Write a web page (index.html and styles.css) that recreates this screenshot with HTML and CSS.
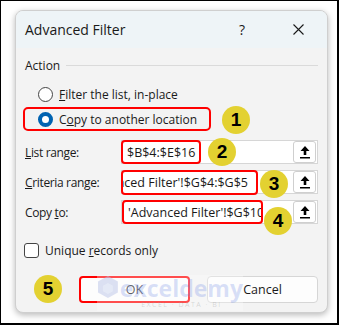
FILE: index.html
```html
<!DOCTYPE html>
<html lang="en">
<head>
  <meta charset="UTF-8">
  <title>Advanced Filter</title>
  <link rel="stylesheet" href="styles.css">
</head>
<body>
<div class="frame">
  <div class="dialog">
    <div class="titlebar">
      <span class="title">Advanced Filter</span>
      <span class="help">?</span>
      <svg class="close" width="11" height="11" viewBox="0 0 11 11">
        <path d="M0.5 0.5 L10.5 10.5 M10.5 0.5 L0.5 10.5" stroke="#1a1a1a" stroke-width="1.1" fill="none"/>
      </svg>
    </div>

    <div class="content">
      <div class="group-head">
        <span>Action</span>
        <div class="rule"></div>
      </div>

      <div class="radio-row">
        <span class="radio"></span>
        <span><u>F</u>ilter the list, in-place</span>
      </div>

      <div class="radio-row marked">
        <span class="radio checked"></span>
        <span>C<u>o</u>py to another location</span>
      </div>

      <div class="field">
        <span class="flabel"><u>L</u>ist range:</span>
        <div class="input">
          <span class="mark">$B$4:$E$16</span>
          <span class="pick">
            <svg width="10" height="13" viewBox="0 0 10 13"><path d="M5 0 L9.5 5 L6.3 5 L6.3 9 L3.7 9 L3.7 5 L0.5 5 Z M0 11 H10 V12.6 H0 Z" fill="#000"/></svg>
          </span>
        </div>
      </div>

      <div class="field">
        <span class="flabel"><u>C</u>riteria range:</span>
        <div class="input">
          <span class="mark mark-wide clip-start"><span>'Advanced Filter'!$G$4:$G$5</span></span>
          <span class="pick">
            <svg width="10" height="13" viewBox="0 0 10 13"><path d="M5 0 L9.5 5 L6.3 5 L6.3 9 L3.7 9 L3.7 5 L0.5 5 Z M0 11 H10 V12.6 H0 Z" fill="#000"/></svg>
          </span>
        </div>
      </div>

      <div class="field">
        <span class="flabel">Copy <u>t</u>o:</span>
        <div class="input">
          <span class="mark mark-wider"><span>'Advanced Filter'!$G$10</span></span>
          <span class="pick">
            <svg width="10" height="13" viewBox="0 0 10 13"><path d="M5 0 L9.5 5 L6.3 5 L6.3 9 L3.7 9 L3.7 5 L0.5 5 Z M0 11 H10 V12.6 H0 Z" fill="#000"/></svg>
          </span>
        </div>
      </div>

      <div class="check-row">
        <span class="checkbox"></span>
        <span>Unique <u>r</u>ecords only</span>
      </div>

      <div class="buttons">
        <span class="btn btn-ok">OK</span>
        <span class="btn">Cancel</span>
      </div>
    </div>
  </div>

  <!-- watermark -->
  <div class="watermark">
    <svg width="22" height="24" viewBox="0 0 22 24">
      <path d="M11 1 L21 6.5 L21 17.5 L11 23 L1 17.5 L1 6.5 Z" fill="#b9c3e8" opacity="0.5"/>
      <path d="M11 8 L16 10.8 L16 16.3 L11 19 L6 16.3 L6 10.8 Z" fill="#e8ecf8" opacity="0.7"/>
    </svg>
    <div class="wm-text">
      <span class="wm-name">exceldemy</span>
      <span class="wm-sub">EXCEL · DATA · BI</span>
    </div>
  </div>

  <!-- number badges -->
  <span class="badge b1">1</span>
  <span class="badge b2">2</span>
  <span class="badge b3">3</span>
  <span class="badge b4">4</span>
  <span class="badge b5">5</span>
</div>
</body>
</html>
```

FILE: styles.css
```css
body {
  margin: 0;
  font-family: "Open Sans", "Noto Sans", sans-serif;
  color: #1a1a1a;
}
.frame {
  position: relative;
  width: 339px;
  height: 325px;
  box-sizing: border-box;
  border: 1px solid #000;
  border-right-width: 2px;
  border-bottom-width: 2px;
  background: #fff;
  padding: 9px 0 0 14px;
}
.dialog {
  width: 313px;
  height: 303px;
  box-sizing: border-box;
  border: 1px solid #cfcfcf;
  border-radius: 8px;
  background: #f3f3f3;
  box-shadow: 0 2px 6px rgba(0,0,0,0.28);
  overflow: hidden;
}
.titlebar {
  height: 37px;
  background: #eef4f7;
  display: flex;
  align-items: center;
  padding: 0 23px 0 9px;
  font-size: 14px;
}
.title {
  flex: 1;
}
.help {
  margin-right: 48px;
  font-size: 14px;
}
.content {
  padding: 0 9px;
  font-size: 12px;
}
.group-head {
  display: flex;
  align-items: center;
  margin-top: 9px;
  height: 16px;
}
.rule {
  flex: 1;
  height: 1px;
  background: #dadada;
  margin-left: 6px;
}
.radio-row {
  display: flex;
  align-items: center;
  height: 20px;
  margin-top: 11px;
  padding-left: 13px;
}
.radio {
  width: 15px;
  height: 15px;
  box-sizing: border-box;
  border: 1px solid #444;
  border-radius: 50%;
  margin-right: 6px;
  background: #fff;
}
.radio.checked {
  border: 4px solid #0063b1;
}
.radio-row.marked {
  height: 24px;
  width: 188px;
  box-sizing: border-box;
  margin: 3px 0 0 -2px;
  padding-left: 13px;
  border: 2px solid #f00;
  border-radius: 5px;
}
.field {
  display: grid;
  grid-template-columns: 96px 1fr;
  align-items: center;
  margin-top: 9px;
}
.field + .field {
  margin-top: 6px;
}
.flabel {
  letter-spacing: -0.35px;
}
.input {
  display: flex;
  align-items: center;
  height: 24px;
  box-sizing: border-box;
  border: 1px solid #d6d6d6;
  background: #fff;
}
.mark {
  display: flex;
  align-items: center;
  height: 24px;
  box-sizing: border-box;
  margin: 0 0 0 -1px;
  padding: 0 4px;
  border: 2px solid #f00;
  border-radius: 4px;
  font-size: 12.5px;
  white-space: nowrap;
  overflow: hidden;
}
.mark-wide {
  width: 137px;
  height: 25px;
}
.clip-start {
  justify-content: flex-end;
  padding-right: 8px;
}
.mark-wider {
  width: 141px;
  margin-left: 0;
  padding-right: 0;
}
.pick {
  margin-left: auto;
  margin-right: 1px;
  width: 23px;
  height: 22px;
  box-sizing: border-box;
  border: 1px solid #cfcfcf;
  border-radius: 3px;
  background: #fff;
  display: flex;
  align-items: center;
  justify-content: center;
}
.check-row {
  display: flex;
  align-items: center;
  height: 20px;
  margin-top: 16px;
  margin-left: -1px;
}
.checkbox {
  width: 15px;
  height: 15px;
  box-sizing: border-box;
  border: 1px solid #444;
  border-radius: 3px;
  background: #fff;
  margin-right: 6px;
}
.buttons {
  display: flex;
  justify-content: flex-end;
  gap: 17px;
  margin-top: 16px;
}
.btn {
  width: 111px;
  height: 27px;
  box-sizing: border-box;
  border: 1px solid #d6d6d6;
  border-radius: 4px;
  background: #fdfdfd;
  display: flex;
  align-items: center;
  justify-content: center;
  font-size: 12.5px;
}
.btn-ok {
  border: 2px solid #f00;
}
.watermark {
  position: absolute;
  left: 96px;
  top: 274px;
  width: 146px;
  height: 36px;
  display: flex;
  align-items: flex-start;
  gap: 1px;
  background: rgba(255,255,255,0.3);
}
.wm-text {
  display: flex;
  flex-direction: column;
  align-items: center;
  line-height: 1;
}
.wm-name {
  font-family: "Open Sans", sans-serif;
  font-weight: 700;
  font-size: 23px;
  color: rgba(120,145,230,0.28);
  margin-top: 2px;
}
.wm-sub {
  font-size: 7px;
  letter-spacing: 1.5px;
  color: rgba(150,150,150,0.35);
  margin-top: 1px;
}
.badge {
  position: absolute;
  width: 28px;
  height: 28px;
  border-radius: 50%;
  background: #e3d131;
  color: #000;
  font-family: "Liberation Sans", Arial, sans-serif;
  font-weight: 700;
  font-size: 19px;
  display: flex;
  align-items: center;
  justify-content: center;
}
.b1 { left: 221px; top: 105px; }
.b2 { left: 207px; top: 137px; }
.b3 { left: 259px; top: 169px; }
.b4 { left: 263px; top: 206px; }
.b5 { left: 33px; top: 274px; }
```
